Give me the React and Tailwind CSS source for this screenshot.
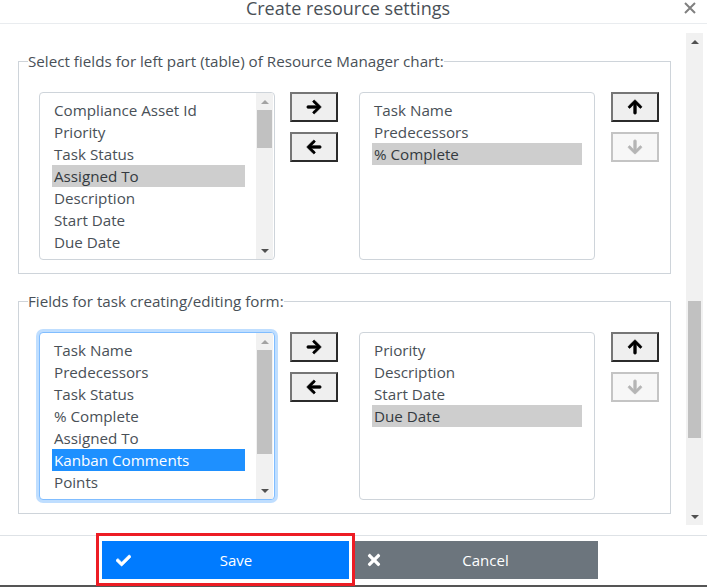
import React from 'react';
import { FaArrowRight, FaArrowLeft, FaArrowUp, FaArrowDown, FaCheck, FaTimes } from 'react-icons/fa';

const Arrow = ({ icon: Icon, disabled }) => (
  <button
    className={
      'flex h-[30px] w-[48px] items-center justify-center border-2 ' +
      (disabled
        ? 'border-[#c4c4c4] bg-[#f7f7f7] text-[#b5b5b5]'
        : 'border-t-[#767676] border-l-[#767676] border-r-[#2b2b2b] border-b-[#2b2b2b] bg-[#efefef] text-black')
    }
  >
    <Icon className="h-[16px] w-[16px]" stroke="currentColor" strokeWidth={24} />
  </button>
);

const ListScroll = ({ height }) => (
  <div className="mr-[1px] flex w-[17px] flex-col items-center bg-[#f1f1f1] text-[#505050]">
    <div className="flex h-[17px] w-full items-center justify-center text-[#a3a3a3]">
      <div className="h-0 w-0 border-x-4 border-b-[4px] border-x-transparent border-b-current" />
    </div>
    <div className="w-full flex-1 px-[1px]">
      <div className="w-full bg-[#c1c1c1]" style={{ height }} />
    </div>
    <div className="flex h-[17px] w-full items-center justify-center">
      <div className="h-0 w-0 border-x-4 border-t-[4px] border-x-transparent border-t-current" />
    </div>
  </div>
);

const ListBox = ({ items, selected, focused, thumbH, cut, itemW = 'w-[193px]' }) => (
  <div
    className={
      'flex h-[168px] w-[236px] overflow-hidden rounded border bg-white ' +
      (focused ? 'border-[#80bdff] shadow-[0_0_0_3px_rgba(0,123,255,0.25)]' : 'border-[#ced4da]')
    }
  >
    <div className="flex-1 overflow-hidden pl-[12px] pt-[6px]">
      {items.map((item) => (
        <div
          key={item}
          className={
            'h-[22px] pl-[2px] text-[15.2px] leading-[22px] whitespace-nowrap ' +
            itemW +
            ' ' +
            (item === selected
              ? focused
                ? 'bg-[#1e90ff] text-white'
                : 'bg-[#cecece] text-[#343a40]'
              : 'text-[#495057]')
          }
        >
          {item}
        </div>
      ))}
      {cut && <div className="h-[22px] pl-[2px] text-[15.2px] leading-[22px] text-[#495057]">{cut}</div>}
    </div>
    {thumbH !== undefined && <ListScroll height={thumbH} />}
  </div>
);

const FieldGroup = ({ title, left, right }) => (
  <fieldset className="w-[653px] border border-[#ced4da] pb-[13px] pl-[9px]">
    <legend className="text-[15.2px] leading-[20px] text-[#495057]">{title}</legend>
    <div className="ml-[11px] mt-[21px] flex items-start">
      <ListBox {...left} />
      <div className="ml-[15px] mr-[21px] flex flex-col gap-[10px]">
        <Arrow icon={FaArrowRight} />
        <Arrow icon={FaArrowLeft} />
      </div>
      <ListBox {...right} itemW="w-[210px]" />
      <div className="ml-[16px] flex flex-col gap-[10px]">
        <Arrow icon={FaArrowUp} />
        <Arrow icon={FaArrowDown} disabled />
      </div>
    </div>
  </fieldset>
);

export default function App() {
  return (
    <div className="flex h-[587px] w-[707px] flex-col overflow-hidden bg-white font-['Open_Sans','Noto_Sans',sans-serif]">
      {/* header */}
      <div className="relative flex h-[24px] shrink-0 justify-center border-b border-[#e9ecef] pr-[11px]">
        <h1 className="text-[18px] leading-[16px] text-[#495057]">Create resource settings</h1>
        <svg className="absolute right-[11px] top-[2px] h-[12px] w-[12px] text-[#808080]" viewBox="0 0 12 12">
          <path d="M1 1L11 11M11 1L1 11" stroke="currentColor" strokeWidth="2" fill="none" />
        </svg>
      </div>

      {/* body */}
      <div className="flex h-[511px] shrink-0">
        <div className="flex w-[668px] shrink-0 flex-col gap-[17px] pl-[18px] pt-[27px]">
          <FieldGroup
            title="Select fields for left part (table) of Resource Manager chart:"
            left={{
              items: ['Compliance Asset Id', 'Priority', 'Task Status', 'Assigned To', 'Description', 'Start Date', 'Due Date'],
              selected: 'Assigned To',
              thumbH: 38,
              cut: 'Completion',
            }}
            right={{ items: ['Task Name', 'Predecessors', '% Complete'], selected: '% Complete' }}
          />
          <FieldGroup
            title="Fields for task creating/editing form:"
            left={{
              items: ['Task Name', 'Predecessors', 'Task Status', '% Complete', 'Assigned To', 'Kanban Comments', 'Points'],
              selected: 'Kanban Comments',
              focused: true,
              thumbH: 104,
              cut: 'Labels',
            }}
            right={{ items: ['Priority', 'Description', 'Start Date', 'Due Date'], selected: 'Due Date' }}
          />
        </div>
        <div className="ml-[18px] mt-[9px] flex h-[492px] w-[17px] flex-col items-center bg-[#f1f1f1]">
          <div className="flex h-[17px] w-full items-center justify-center">
            <div className="h-0 w-0 border-x-4 border-b-[4px] border-x-transparent border-b-[#505050]" />
          </div>
          <div className="w-full flex-1 px-[2px]">
            <div className="mt-[251px] h-[137px] w-full bg-[#c1c1c1]" />
          </div>
          <div className="flex h-[17px] w-full items-center justify-center">
            <div className="h-0 w-0 border-x-4 border-t-[4px] border-x-transparent border-t-[#505050]" />
          </div>
        </div>
      </div>

      {/* footer */}
      <div className="relative flex flex-1 items-start border-b-2 border-t border-b-[#555555] border-t-[#dee2e6] pl-[102px] pt-[5px]">
        <button className="relative flex h-[38px] w-[247px] items-center bg-[#007bff] pl-[14px] pr-[8px] text-[15px] text-white">
          <FaCheck className="h-[15px] w-[15px] shrink-0" stroke="currentColor" strokeWidth={20} />
          <span className="flex-1 text-center">Save</span>
          <span className="absolute -bottom-[7px] -left-[6px] -right-[6px] -top-[8px] border-[3px] border-[#ed1c24]" />
        </button>
        <button className="ml-[6px] flex h-[38px] w-[243px] items-center bg-[#6c757d] pl-[10px] pr-[10px] text-[15px] text-white">
          <FaTimes className="h-[18px] w-[18px] shrink-0" />
          <span className="flex-1 text-center">Cancel</span>
        </button>
      </div>
    </div>
  );
}
